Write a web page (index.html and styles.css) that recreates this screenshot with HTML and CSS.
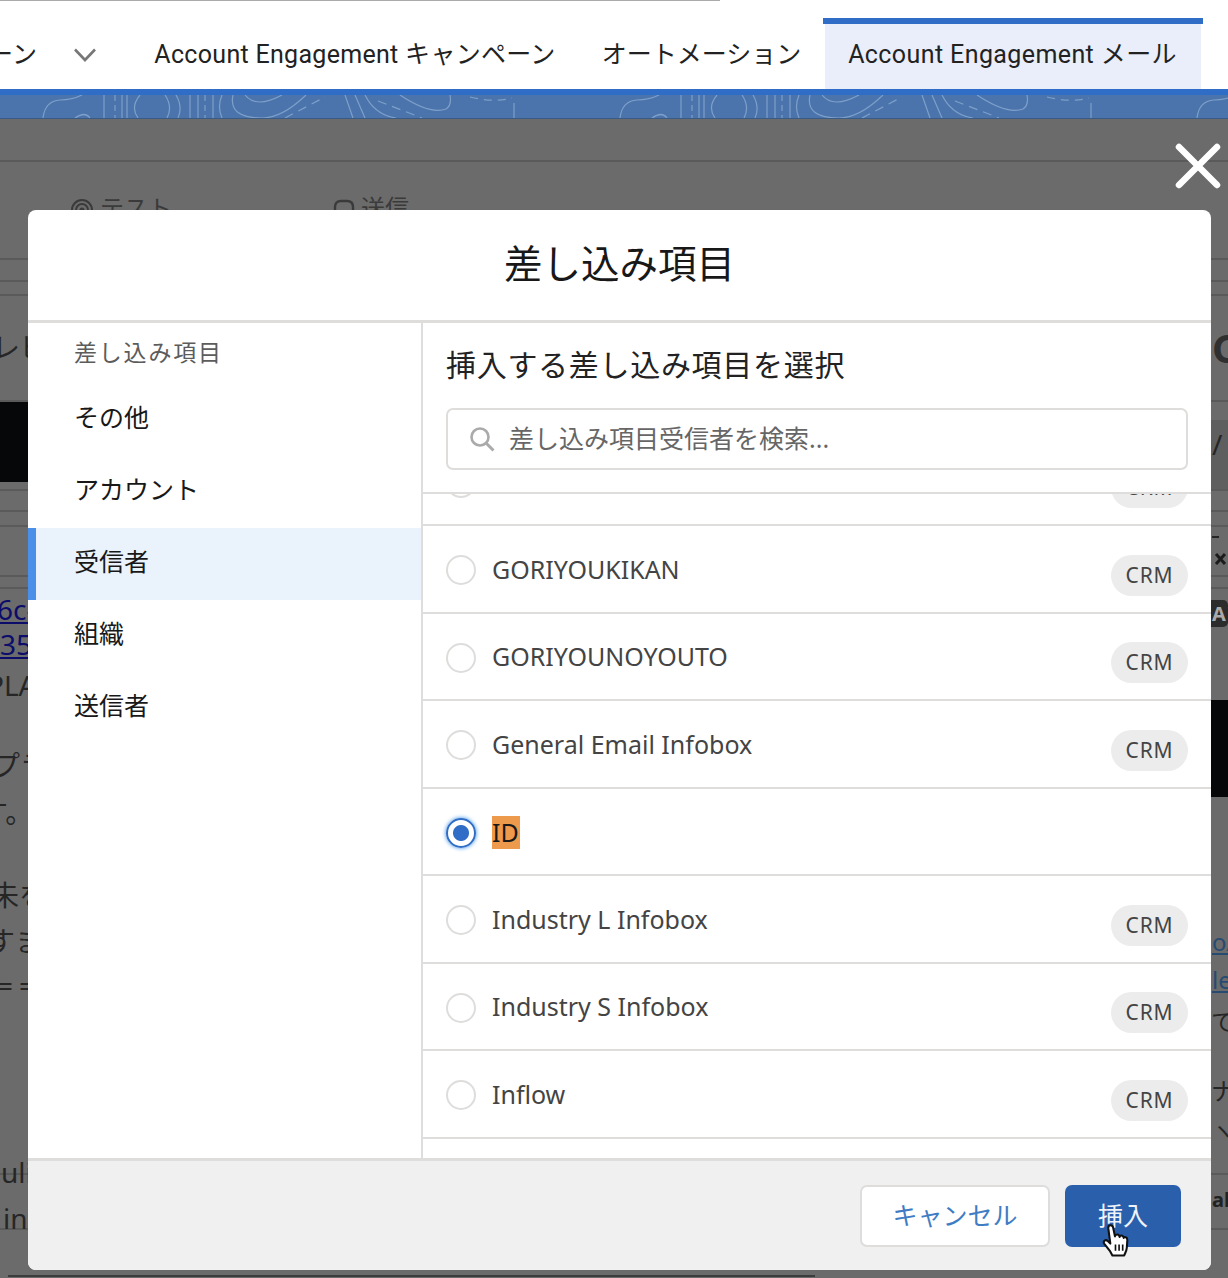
FILE: index.html
```html
<!DOCTYPE html>
<html lang="ja">
<head>
    <meta charset="UTF-8">
    <meta name="viewport" content="width=device-width, initial-scale=1.0">
    <title>差し込み項目</title>
    <link rel="stylesheet" href="styles.css">
</head>
<body>
    <!-- 上部ナビ -->
    <nav class="tabs">
        <span class="tab tab-cut">ーン</span>
        <svg class="tab-chevron" width="24" height="14" viewBox="0 0 24 14"><path d="M2 1.5 L12 12 L22 1.5" fill="none" stroke="#777" stroke-width="2.6"/></svg>
        <span class="tab">Account Engagement キャンペーン</span>
        <span class="tab tab-tight">オートメーション</span>
        <span class="tab tab-active">Account Engagement メール</span>
    </nav>
    <div class="band">
        <svg class="band-art" width="1228" height="23">
            <defs>
                <pattern id="topo" width="577" height="23" patternUnits="userSpaceOnUse">
                    <g fill="none" stroke="#7d9fca" stroke-width="1.2">
                        <path d="M43 23 Q45 6 60 5 Q72 5 82 0"/>
                        <path d="M75 23 Q85 16 90 23"/>
                        <path d="M104 0 V23 M122 0 V23 M127 0 V23"/>
                        <path d="M115 0 V23" stroke-dasharray="6 4"/>
                        <path d="M140 0 Q130 12 138 23"/>
                        <path d="M165 0 Q173 12 167 23 M176 0 Q183 12 178 23"/>
                        <path d="M190 0 V23 M198 0 V23 M213 0 V23"/>
                        <path d="M205 0 V23" stroke-dasharray="6 4"/>
                        <path d="M222 0 Q217 12 222 23"/>
                        <path d="M233 0 Q228 23 262 23 Q282 23 306 0"/>
                        <path d="M245 0 Q256 14 282 0"/>
                        <path d="M285 23 L325 2" stroke-dasharray="9 6"/>
                        <path d="M345 0 L353 23 M355 0 L365 23"/>
                        <path d="M365 0 Q375 20 396 23"/>
                        <path d="M378 6 L422 23" stroke-dasharray="9 6"/>
                        <path d="M400 0 Q430 20 446 14 Q452 10 450 0"/>
                        <path d="M470 2 Q495 8 512 3" stroke-dasharray="8 6"/>
                        <path d="M514 8 V23"/>
                    </g>
                </pattern>
            </defs>
            <rect width="1228" height="23" fill="url(#topo)"/>
        </svg>
    </div>

    <!-- 背景のページ（モーダルの裏） -->
    <div class="backdrop">
        <div class="bg-line line-a"></div>
        <div class="bg-line line-b"></div>
        <div class="bg-line line-c"></div>
        <div class="bg-line line-d"></div>
        <div class="bg-line line-e"></div>
        <div class="bg-line line-f"></div>
        <div class="bg-line line-g"></div>
        <div class="bg-line line-h"></div>
        <div class="bg-line line-i"></div>
        <div class="bg-line line-j"></div>
        <div class="bg-line line-k"></div>
        <div class="bg-line line-l"></div>
        <div class="bg-shade"></div>
        <div class="bg-block block-left"></div>
        <div class="bg-block block-right"></div>
        <svg class="bg-icon icon-test" width="24" height="24" viewBox="0 0 24 24"><g fill="none" stroke="#3a3a3a" stroke-width="2"><circle cx="12" cy="12" r="10"/><circle cx="12" cy="12" r="6"/></g><circle cx="12" cy="12" r="2.5" fill="#3a3a3a"/></svg>
        <span class="bg-text t-test">テスト</span>
        <svg class="bg-icon icon-send" width="24" height="24" viewBox="0 0 24 24"><path d="M3 22 V9 Q3 3 9 3 H15 Q21 3 21 9 V22" fill="none" stroke="#3a3a3a" stroke-width="2.4"/></svg>
        <span class="bg-text t-send">送信</span>
        <span class="bg-text t-1">レビ</span>
        <span class="bg-text bg-link t-2">6c-</span>
        <span class="bg-text bg-link t-3">35</span>
        <span class="bg-text t-4">PLA</span>
        <span class="bg-text t-5">プラ</span>
        <span class="bg-text t-6">す。</span>
        <span class="bg-text t-7">未を</span>
        <span class="bg-text t-8">すま</span>
        <span class="bg-text t-9">==</span>
        <span class="bg-text t-10">uli</span>
        <span class="bg-text t-11">in</span>
        <span class="bg-text t-c">C</span>
        <span class="bg-text t-slash">/</span>
        <svg class="bg-icon icon-mark" width="16" height="34" viewBox="0 0 16 34"><path d="M0 2 H7" stroke="#262626" stroke-width="2"/><path d="M4 19 L13 29 M13 19 L4 29" stroke="#1c1c1c" stroke-width="3"/></svg>
        <span class="bg-badge">A</span>
        <span class="bg-text bg-link t-oa">o/</span>
        <span class="bg-text bg-link t-le">le</span>
        <span class="bg-text t-12">てる</span>
        <span class="bg-text t-13">ナス</span>
        <span class="bg-text t-14">ヽて</span>
        <span class="bg-text t-ab">ab</span>
        <div class="bg-foot"></div>
    </div>

    <svg class="close-x" width="46" height="46" viewBox="0 0 46 46"><path d="M4 4 L42 42 M42 4 L4 42" stroke="#fff" stroke-width="6.5" stroke-linecap="round"/></svg>

    <!-- モーダル -->
    <div class="modal">
        <header class="modal-head">差し込み項目</header>
        <div class="modal-body">
            <aside class="side">
                <div class="side-title">差し込み項目</div>
                <div class="side-item">その他</div>
                <div class="side-item">アカウント</div>
                <div class="side-item side-item-on">受信者</div>
                <div class="side-item">組織</div>
                <div class="side-item">送信者</div>
            </aside>
            <section class="pick">
                <div class="pick-top">
                    <h2 class="pick-title">挿入する差し込み項目を選択</h2>
                    <div class="search">
                        <svg width="28" height="28" viewBox="0 0 28 28"><circle cx="12" cy="12" r="8.5" fill="none" stroke="#aaa" stroke-width="2.6"/><path d="M18 18 L25.5 25.5" stroke="#aaa" stroke-width="3"/></svg>
                        <span class="search-text">差し込み項目受信者を検索...</span>
                    </div>
                </div>
                <div class="list">
                    <div class="row row-first"><i class="radio"></i><span class="row-label">Gender</span><span class="pill">CRM</span></div>
                    <div class="row"><i class="radio"></i><span class="row-label">GORIYOUKIKAN</span><span class="pill">CRM</span></div>
                    <div class="row"><i class="radio"></i><span class="row-label">GORIYOUNOYOUTO</span><span class="pill">CRM</span></div>
                    <div class="row"><i class="radio"></i><span class="row-label">General Email Infobox</span><span class="pill">CRM</span></div>
                    <div class="row"><i class="radio radio-on"></i><span class="row-label row-mark">ID</span></div>
                    <div class="row"><i class="radio"></i><span class="row-label">Industry L Infobox</span><span class="pill">CRM</span></div>
                    <div class="row"><i class="radio"></i><span class="row-label">Industry S Infobox</span><span class="pill">CRM</span></div>
                    <div class="row"><i class="radio"></i><span class="row-label">Inflow</span><span class="pill">CRM</span></div>
                    <div class="row"></div>
                </div>
            </section>
        </div>
        <footer class="modal-foot">
            <button class="btn"><span class="btn-text">キャンセル</span></button>
            <button class="btn btn-main"><span class="btn-text">挿入</span></button>
        </footer>
    </div>

    <!-- マウスカーソル -->
    <svg class="hand" width="32" height="35" viewBox="0 0 30 34">
        <path d="M9 27 L3.5 20 C2 17.5 5 15.5 7 17.5 L9.5 20 L7.5 5 C7.2 1.5 11.5 1 12.2 4.5 L14 13 C14.5 10.5 18 10.5 18.5 13.5 C19 11.5 22 11.8 22.5 14.5 C23.2 13 26 13.5 26 16.5 L25.5 24 C25.3 27 24 29 23 31.5 L11.5 31.5 Z" fill="#fff" stroke="#111" stroke-width="2" stroke-linejoin="round"/>
        <path d="M14.5 21 V27 M18 21 V27 M21.5 21 V27" stroke="#111" stroke-width="1.6"/>
    </svg>
</body>
</html>
```
FILE: styles.css
```css
* {
    box-sizing: border-box;
}
html,
body {
    margin: 0;
    height: 1278px;
    overflow: hidden;
}
body {
    position: relative;
    background: #6b6b6b;
    font-family: "Noto Sans", "Noto Sans CJK JP", sans-serif;
}

/* 上部ナビ */
.tabs {
    display: flex;
    align-items: center;
    height: 89px;
    padding-top: 20px;
    background: #fff;
    border-top: 1px solid #aaa;
    border-image: linear-gradient(to right, #aaa 720px, #fff 720px) 1;
    font-family: Roboto, "Noto Sans CJK JP", sans-serif;
    font-size: 25px;
    letter-spacing: 0.3px;
    color: #222;
    white-space: nowrap;
    overflow: hidden;
}
.tab {
    line-height: 30px;
}
.tab-cut {
    margin-left: -12px;
}
.tab-chevron {
    margin: 0 57px 0 36px;
}
.tab + .tab {
    margin-left: 46px;
}
.tab-tight {
    letter-spacing: 0;
}
.tab.tab-active {
    display: flex;
    align-items: center;
    align-self: flex-end;
    height: 71px;
    margin-left: 22px;
    padding: 2px 26px 0 25px;
    width: 380px;
    flex: none;
    letter-spacing: 0.4px;
    background: linear-gradient(#2f6dc6, #2f6dc6) top / 100% 6px no-repeat,
        linear-gradient(#e9eefa, #e9eefa) 2px 0 / 376px 100% no-repeat;
}

.band {
    height: 30px;
    background: #4a74ab;
    border-top: 6px solid #2f6dc6;
    border-bottom: 1px solid #3a5a86;
}
.band-art {
    display: block;
}

/* 背景のページ */
.backdrop {
    position: absolute;
    left: 0;
    top: 119px;
    width: 1228px;
    height: 1159px;
    overflow: hidden;
    background: #6b6b6b;
}
.bg-line {
    position: absolute;
    left: 0;
    right: 0;
    height: 2px;
    background: #5a5a5a;
}
.line-a { top: 41px; }
.line-b { top: 139px; }
.line-c { top: 161px; }
.line-d { top: 175px; }
.line-e { top: 281px; }
.line-f { top: 370px; }
.line-g { top: 391px; }
.line-h { top: 406px; }
.line-i { top: 456px; }
.line-j { top: 468px; }
.line-k { top: 1054px; }
.line-l { top: 1109px; }
.bg-shade {
    position: absolute;
    left: 1190px;
    top: 301px;
    width: 38px;
    height: 69px;
    background: #5f5f5f;
}
.bg-block {
    position: absolute;
    background: #050709;
}
.block-left {
    left: 0;
    top: 283px;
    width: 40px;
    height: 80px;
}
.block-right {
    left: 1190px;
    top: 581px;
    width: 38px;
    height: 97px;
}
.bg-icon {
    position: absolute;
}
.icon-test { left: 70px; top: 79px; }
.icon-send { left: 332px; top: 79px; }
.icon-mark { left: 1212px; top: 416px; }
.bg-text {
    position: absolute;
    font-size: 28px;
    line-height: 36px;
    color: #262626;
    white-space: nowrap;
}
.bg-link {
    color: #0c0c6a;
    text-decoration: underline;
}
.t-test { left: 100px; top: 71px; font-size: 24px; color: #3a3a3a; }
.t-send { left: 361px; top: 71px; font-size: 24px; color: #3a3a3a; }
.t-1 { left: -8px; top: 210px; }
.t-2 { left: -3px; top: 472px; }
.t-3 { left: 0; top: 507px; }
.t-4 { left: -13px; top: 548px; }
.t-5 { left: -8px; top: 628px; }
.t-6 { left: -20px; top: 675px; }
.t-7 { left: -9px; top: 758px; }
.t-8 { left: -13px; top: 804px; }
.t-9 { left: -3px; top: 848px; letter-spacing: 6px; }
.t-10 { left: 1px; top: 1035px; }
.t-11 { left: 3px; top: 1081px; }
.t-c { left: 1212px; top: 207px; font-size: 40px; line-height: 44px; font-weight: 700; color: #303030; }
.t-slash { left: 1212px; top: 307px; }
.bg-badge {
    position: absolute;
    left: 1198px;
    top: 481px;
    width: 30px;
    height: 27px;
    padding-left: 14px;
    border-radius: 5px;
    background: #2c2c2c;
    color: #aaa;
    font-size: 20px;
    font-weight: 700;
    line-height: 27px;
}
.t-oa { left: 1212px; top: 805px; font-size: 24px; color: #274a70; }
.t-le { left: 1212px; top: 843px; font-size: 24px; color: #274a70; }
.t-12 { left: 1211px; top: 885px; font-size: 24px; }
.t-13 { left: 1211px; top: 954px; font-size: 24px; }
.t-14 { left: 1211px; top: 994px; font-size: 24px; }
.t-ab { left: 1212px; top: 1063px; font-weight: 700; font-size: 20px; color: #222; }
.bg-foot {
    position: absolute;
    left: 8px;
    top: 1156px;
    width: 807px;
    height: 2px;
    background: #3c3c3c;
}

.close-x {
    position: absolute;
    left: 1175px;
    top: 143px;
}

/* モーダル */
.modal {
    position: absolute;
    left: 28px;
    top: 210px;
    width: 1183px;
    height: 1060px;
    display: flex;
    flex-direction: column;
    background: #fff;
    border-radius: 8px;
    overflow: hidden;
}
.modal-head {
    height: 113px;
    padding-top: 25px;
    border-bottom: 3px solid #dedddb;
    text-align: center;
    font-size: 38.5px;
    line-height: 56px;
    color: #181818;
}
.modal-body {
    flex: 1;
    display: flex;
    min-height: 0;
}
.side {
    width: 395px;
    border-right: 2px solid #dedddb;
}
.side-title {
    height: 61px;
    padding: 12px 0 0 46px;
    font-size: 23px;
    line-height: 34px;
    letter-spacing: 1.8px;
    color: #5c5c5c;
}
.side-item {
    height: 72px;
    padding-left: 46px;
    font-size: 25px;
    line-height: 66px;
    color: #181818;
}
.side-item-on {
    padding-left: 38px;
    border-left: 8px solid #4a8fe8;
    background: #eaf2fc;
}
.pick {
    flex: 1;
    min-width: 0;
    display: flex;
    flex-direction: column;
}
.pick-top {
    height: 171px;
    padding: 0 23px 0 23px;
    border-bottom: 2px solid #dedddb;
}
.pick-title {
    margin: 21px 0 22px;
    height: 42px;
    font-size: 30px;
    line-height: 42px;
    font-weight: 400;
    letter-spacing: 0.7px;
    color: #222;
}
.search {
    display: flex;
    align-items: center;
    gap: 13px;
    height: 62px;
    padding-left: 20px;
    border: 2px solid #dedddb;
    border-radius: 7px;
    font-size: 25px;
    color: #666;
}
.search-text {
    margin-top: -5px;
}
.list {
    flex: 1;
    min-height: 0;
    overflow: hidden;
}
.row {
    display: flex;
    align-items: center;
    height: 87.5px;
    padding: 0 23px;
    border-bottom: 2px solid #dedddb;
}
.row-first {
    margin-top: -55.5px;
}
.radio {
    width: 30px;
    height: 30px;
    margin-top: 3px;
    border: 2px solid #dedddb;
    border-radius: 50%;
    flex: none;
}
.radio-on {
    border-color: #2f6dc6;
    box-shadow: 0 0 4px #2f8be8;
    background: radial-gradient(circle, #2f6dc6 0 7.5px, #fff 8.5px);
}
.row-label {
    margin-left: 16px;
    font-size: 25px;
    line-height: 33px;
    margin-top: 1px;
    color: #444;
}
.row-mark {
    background: #ee9a4c;
    color: #1a1a1a;
    margin-top: 2px;
    padding-right: 1px;
}
.pill {
    margin-left: auto;
    margin-top: 13px;
    width: 77px;
    height: 41px;
    border-radius: 21px;
    background: #ececec;
    text-align: center;
    font-size: 21px;
    line-height: 41px;
    letter-spacing: 0.8px;
    color: #444;
}
.modal-foot {
    height: 112px;
    display: flex;
    justify-content: flex-end;
    align-items: flex-start;
    gap: 15px;
    padding: 24px 30px 0 0;
    background: #f0f0f1;
    border-top: 3px solid #dedddb;
}
.btn {
    height: 62px;
    padding: 0 0 4px;
    font-family: inherit;
    font-size: 25px;
    border-radius: 7px;
    border: 2px solid #dedddb;
    background: #fff;
    color: #3f7cc4;
    width: 190px;
}
.btn-main {
    width: 116px;
    border: 0;
    background: #2a5fab;
    color: #eef3fa;
}
.hand {
    position: absolute;
    left: 1100px;
    top: 1223px;
}
```
